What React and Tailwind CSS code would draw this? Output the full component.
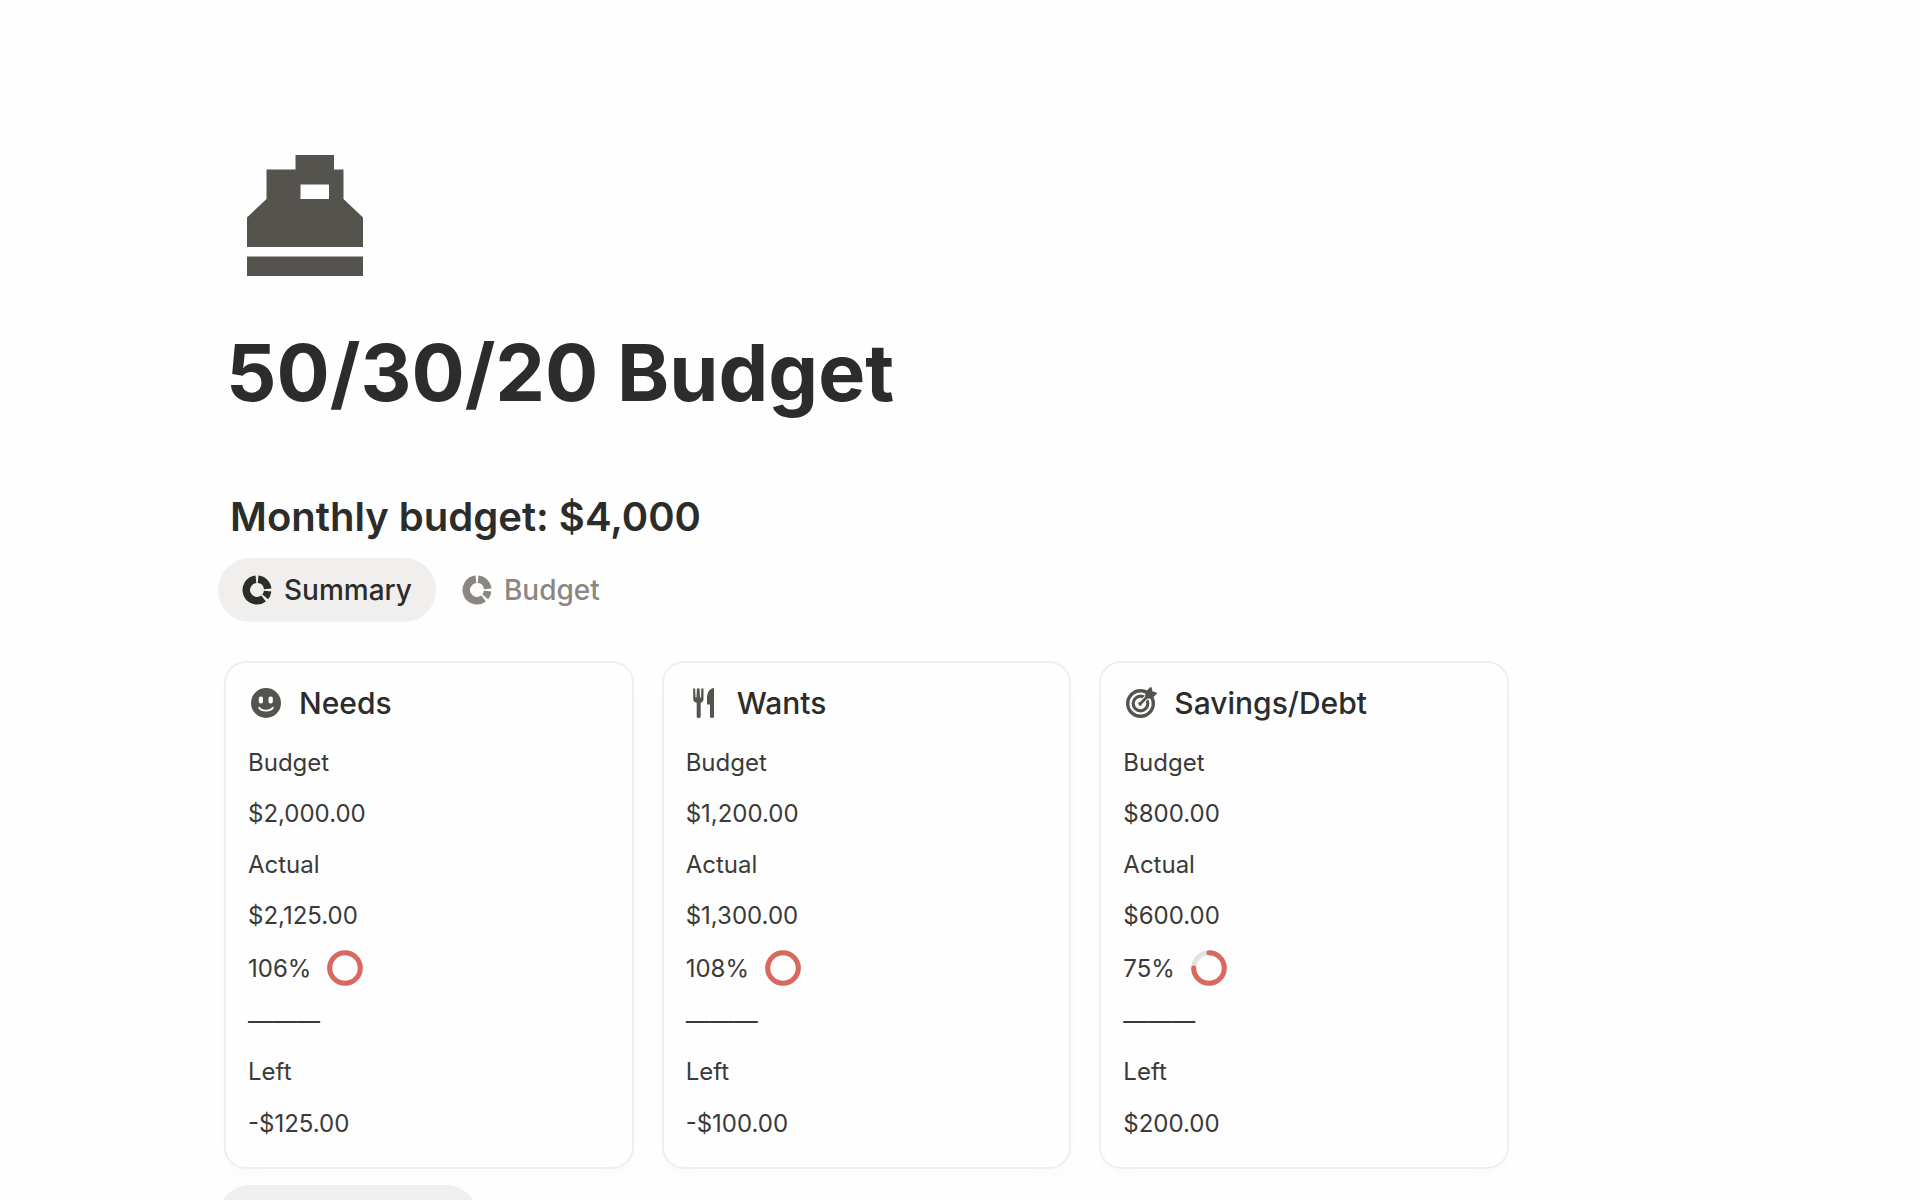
// App.jsx
import React, { useState } from "react";

const cards = [
  {
    title: "Needs",
    icon: SmileIcon,
    budget: "$2,000.00",
    actual: "$2,125.00",
    percent: 106,
    left: "-$125.00",
  },
  {
    title: "Wants",
    icon: ForkKnifeIcon,
    budget: "$1,200.00",
    actual: "$1,300.00",
    percent: 108,
    left: "-$100.00",
  },
  {
    title: "Savings/Debt",
    icon: TargetIcon,
    budget: "$800.00",
    actual: "$600.00",
    percent: 75,
    left: "$200.00",
  },
];

const tabs = ["Summary", "Budget"];

function RegisterIcon() {
  return (
    <svg viewBox="0 0 116 122" className="w-[116px] h-[122px] fill-[#55534e]" aria-hidden="true">
      <path
        fillRule="evenodd"
        d="M48.5 0H87V14.500H96.500V44L116 62.500V92H0V62.500L19.500 44V14.500H48.500ZM53.500 29.500V44H82V29.500Z"
      />
      <rect x="0" y="101.500" width="116" height="19.500" />
    </svg>
  );
}

function DonutIcon() {
  return (
    <svg
      viewBox="-15 -15 30 30"
      className="w-[30px] h-[30px]"
      fill="none"
      stroke="currentColor"
      strokeWidth="7.500"
      aria-hidden="true"
    >
      <path d="M1.100 -10.700A10.750 10.750 0 0 1 10.700 -1.100" />
      <path d="M10.650 1.200A10.750 10.750 0 0 1 8.230 6.910" />
      <path d="M6.600 8.500A10.750 10.750 0 1 1 -1.100 -10.700" />
    </svg>
  );
}

function SmileIcon() {
  return (
    <svg viewBox="0 0 32 32" className="w-8 h-8" aria-hidden="true">
      <circle cx="16" cy="16" r="15" fill="#55534e" />
      <rect x="8.800" y="9.500" width="4.200" height="7" rx="1.800" fill="#fefefe" />
      <rect x="18.600" y="9.500" width="4.200" height="7" rx="1.800" fill="#fefefe" />
      <path
        d="M9.200 20.800C11.500 24.600 20.500 24.600 22.800 20.800"
        fill="none"
        stroke="#fefefe"
        strokeWidth="1.900"
        strokeLinecap="round"
      />
    </svg>
  );
}

function ForkKnifeIcon() {
  return (
    <svg viewBox="0 0 32 32" className="w-8 h-8 fill-[#55534e]" aria-hidden="true">
      <path d="M5.200 1.800Q6.200 0.600 7.200 1.800L7.500 10.500H8.500L8.900 1.800Q10.300 0.600 11.600 1.800L12 10.500H13L13.300 1.800Q14.500 0.600 15.500 1.800V12Q15.500 15 12.700 15.800V29.500Q12.700 31 10.700 31T8.700 29.500V15.800Q5.200 15 5.200 12Z" />
      <path d="M26 1.500V29.500Q26 31 24 31T22 29.500V17.500H19V10Q19.500 3 24.500 1.200Q26 0.700 26 1.500Z" />
    </svg>
  );
}

function TargetIcon() {
  return (
    <svg viewBox="0 0 32 32" className="w-8 h-8" fill="none" stroke="#55534e" aria-hidden="true">
      <circle cx="15.500" cy="16.500" r="12.800" strokeWidth="3.400" />
      <circle cx="15.500" cy="16.500" r="7.300" strokeWidth="3.200" />
      <circle cx="15.500" cy="16.500" r="2.200" fill="#55534e" stroke="none" />
      <path d="M15.500 16.500L25 7" stroke="#fefefe" strokeWidth="4.600" />
      <path d="M15.500 16.500L25 7" strokeWidth="2.800" strokeLinecap="round" />
      <path
        d="M21 10.500V5.500L25.800 0.700L27 5L31.200 6.200L26.500 11Z"
        fill="#55534e"
        strokeWidth="1.500"
        strokeLinejoin="round"
      />
    </svg>
  );
}

function ProgressRing({ percent }) {
  const value = Math.min(percent, 100);
  return (
    <svg
      viewBox="0 0 36 36"
      className="w-9 h-9"
      fill="none"
      strokeWidth="5"
      role="img"
      aria-label={`${percent}%`}
    >
      <circle cx="18" cy="18" r="15.300" stroke="#e3e2df" />
      <circle
        cx="18"
        cy="18"
        r="15.300"
        stroke="#d9695f"
        strokeLinecap="round"
        pathLength="100"
        strokeDasharray={`${value} 100`}
        transform="rotate(-90 18 18)"
      />
    </svg>
  );
}

function BudgetCard({ card }) {
  const Icon = card.icon;
  return (
    <div className="rounded-[22px] border-2 border-[#f0efed] px-[22px] py-4 shadow-[0_4px_12px_rgba(0,0,0,0.02)]">
      <h3 className="flex items-center gap-[17px] h-12 mb-[10px] pl-[2px] text-[30px] font-medium">
        <Icon />
        {card.title}
      </h3>
      <div className="text-[24px] leading-[51px] text-[#3a3a38]">
        <p>Budget</p>
        <p>{card.budget}</p>
        <p>Actual</p>
        <p>{card.actual}</p>
        <div className="flex items-center gap-4 h-[54px]">
          <span>{card.percent}%</span>
          <ProgressRing percent={card.percent} />
        </div>
        <p>———</p>
        <p>Left</p>
        <p className="leading-[54px]">{card.left}</p>
      </div>
    </div>
  );
}

export default function App() {
  const [active, setActive] = useState("Summary");

  return (
    <div className="h-screen overflow-hidden bg-[#fefefe] font-['Inter',sans-serif] text-[#2c2c2b]">
      <main className="max-w-[1515px] pl-[218px] pt-[155px]">
        <div className="pl-[29px]">
          <RegisterIcon />
        </div>
        <h1 className="mt-[47px] pl-2 text-[79px] leading-[96px] font-bold">50/30/20 Budget</h1>
        <h2 className="mt-[73px] pl-3 text-[40px] leading-[48px] font-semibold">
          Monthly budget: $4,000
        </h2>

        <div className="flex gap-[2px] mt-[17px]">
          {tabs.map((tab) => (
            <button
              key={tab}
              type="button"
              onClick={() => setActive(tab)}
              className={
                tab === active
                  ? "flex items-center gap-3 h-16 px-6 rounded-full text-[28px] font-medium bg-[#f0efed]"
                  : "flex items-center gap-3 h-16 px-6 rounded-full text-[28px] font-medium text-[#8a8782]"
              }
            >
              <DonutIcon />
              {tab}
            </button>
          ))}
        </div>

        <div className="grid grid-cols-3 gap-7 mt-[39px] px-[6px]">
          {cards.map((card) => (
            <BudgetCard key={card.title} card={card} />
          ))}
        </div>

        <button
          type="button"
          aria-label="Next view"
          className="block w-[260px] h-16 mt-4 rounded-full bg-[#f0efed]"
        />
      </main>
    </div>
  );
}
